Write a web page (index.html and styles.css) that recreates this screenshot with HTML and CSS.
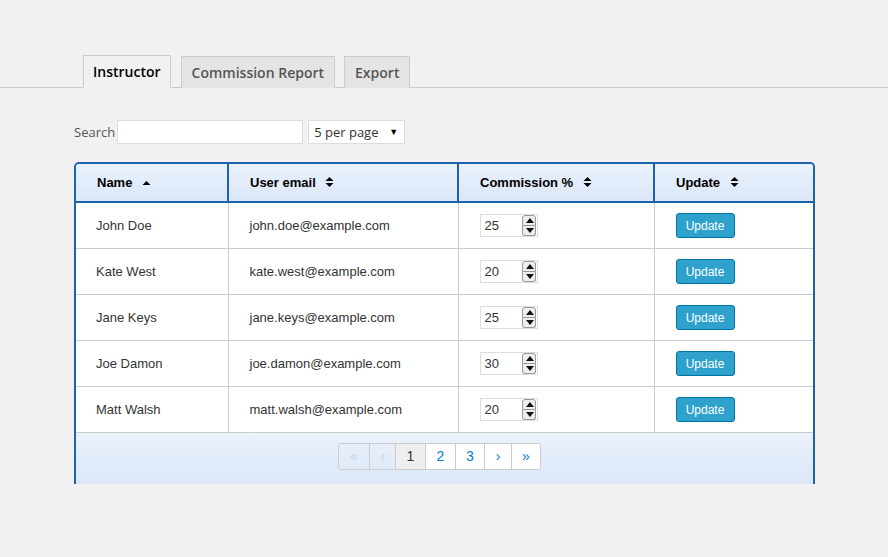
FILE: index.html
```html
<!DOCTYPE html>
<html lang="en">
<head>
    <meta charset="UTF-8">
    <title>Instructor Commission</title>
    <link rel="stylesheet" href="styles.css">
</head>
<body>
    <div class="tabs">
        <a class="tab active" href="#">Instructor</a>
        <a class="tab" href="#">Commission Report</a>
        <a class="tab" href="#">Export</a>
    </div>
    <main>
        <div class="toolbar">
            <label for="search">Search</label>
            <input type="text" id="search" class="search">
            <div class="per-page">5 per page <span class="caret">&#9660;</span></div>
        </div>
        <div class="grid">
            <table>
                <thead>
                    <tr>
                        <th class="c1">Name <svg class="sort" width="9" height="10" viewBox="0 0 9 10"><path d="M0.5 7 L4.5 3 L8.5 7 Z"/></svg></th>
                        <th class="c2">User email <svg class="sort" width="9" height="12" viewBox="0 0 9 12"><path d="M0.5 5 L4.5 1 L8.5 5 Z M0.5 7 L4.5 11 L8.5 7 Z"/></svg></th>
                        <th class="c3">Commission % <svg class="sort" width="9" height="12" viewBox="0 0 9 12"><path d="M0.5 5 L4.5 1 L8.5 5 Z M0.5 7 L4.5 11 L8.5 7 Z"/></svg></th>
                        <th class="c4">Update <svg class="sort" width="9" height="12" viewBox="0 0 9 12"><path d="M0.5 5 L4.5 1 L8.5 5 Z M0.5 7 L4.5 11 L8.5 7 Z"/></svg></th>
                    </tr>
                </thead>
                <tbody>
                    <tr>
                        <td>John Doe</td>
                        <td>john.doe@example.com</td>
                        <td><div class="num"><span>25</span><span class="spin"><i class="up"></i><i class="down"></i></span></div></td>
                        <td><button class="update">Update</button></td>
                    </tr>
                    <tr>
                        <td>Kate West</td>
                        <td>kate.west@example.com</td>
                        <td><div class="num"><span>20</span><span class="spin"><i class="up"></i><i class="down"></i></span></div></td>
                        <td><button class="update">Update</button></td>
                    </tr>
                    <tr>
                        <td>Jane Keys</td>
                        <td>jane.keys@example.com</td>
                        <td><div class="num"><span>25</span><span class="spin"><i class="up"></i><i class="down"></i></span></div></td>
                        <td><button class="update">Update</button></td>
                    </tr>
                    <tr>
                        <td>Joe Damon</td>
                        <td>joe.damon@example.com</td>
                        <td><div class="num"><span>30</span><span class="spin"><i class="up"></i><i class="down"></i></span></div></td>
                        <td><button class="update">Update</button></td>
                    </tr>
                    <tr>
                        <td>Matt Walsh</td>
                        <td>matt.walsh@example.com</td>
                        <td><div class="num"><span>20</span><span class="spin"><i class="up"></i><i class="down"></i></span></div></td>
                        <td><button class="update">Update</button></td>
                    </tr>
                </tbody>
            </table>
            <div class="pager-bar">
                <ul class="pager">
                    <li class="off w30">&laquo;</li>
                    <li class="off w26">&lsaquo;</li>
                    <li class="current w30">1</li>
                    <li class="w30">2</li>
                    <li class="w29">3</li>
                    <li class="w27">&rsaquo;</li>
                    <li class="w29">&raquo;</li>
                </ul>
            </div>
        </div>
    </main>
</body>
</html>
```

FILE: styles.css
```css
body {
    margin: 0;
    background: #f1f1f1;
    font-family: "Open Sans", sans-serif;
    color: #444;
}
.tabs {
    display: flex;
    align-items: flex-end;
    gap: 9px;
    padding: 55px 0 0 83px;
    border-bottom: 1px solid #ccc;
    height: 32px;
}
.tab {
    display: block;
    box-sizing: border-box;
    height: 32px;
    padding: 0 10px;
    margin-bottom: -1px;
    border: 1px solid #ccc;
    border-bottom: none;
    background: #e4e4e4;
    color: #555;
    font-size: 14px;
    font-weight: 600;
    line-height: 31px;
    text-decoration: none;
}
.tab.active {
    height: 33px;
    padding: 0 9px;
    margin-right: 1px;
    background: #f1f1f1;
    color: #000;
    border-bottom: 1px solid #f1f1f1;
}
main {
    padding: 32px 73px 0 74px;
}
.toolbar {
    display: flex;
    align-items: center;
    height: 24px;
    font-size: 13px;
}
.toolbar label {
    color: #555;
    margin-right: 2px;
}
.search {
    box-sizing: border-box;
    width: 186px;
    height: 24px;
    margin: 0 5px 0 0;
    border: 1px solid #ddd;
    background: #fff;
}
.per-page {
    box-sizing: border-box;
    width: 97px;
    height: 24px;
    padding: 0 0 0 5px;
    border: 1px solid #ddd;
    background: #fff;
    color: #333;
    font-size: 13px;
    line-height: 22px;
    position: relative;
}
.caret {
    position: absolute;
    right: 6px;
    top: 0;
    font-size: 9px;
    color: #000;
}
.grid {
    margin-top: 18px;
    width: 741px;
    box-sizing: border-box;
    border: 2px solid #1d62ad;
    border-bottom: none;
    border-radius: 5px 5px 0 0;
    overflow: hidden;
    font-family: "Liberation Sans", Arial, sans-serif;
}
table {
    width: 100%;
    border-collapse: collapse;
    table-layout: fixed;
}
th {
    height: 37px;
    padding: 0 0 0 21px;
    text-align: left;
    font-size: 13px;
    font-weight: bold;
    color: #000;
    background: linear-gradient(#e9f1fc, #dbe7f8);
    border-bottom: 2px solid #1d62ad;
    border-left: 2px solid #1d62ad;
}
th.c1 { width: 130px; border-left: none; }
th.c2 { width: 207px; }
th.c3 { width: 173px; }
.sort {
    margin-left: 6px;
    vertical-align: -1px;
}
td {
    height: 45px;
    padding: 0 0 0 21px;
    font-size: 13px;
    color: #333;
    background: #fff;
    border-left: 1px solid #ccc;
    border-bottom: 1px solid #ccc;
}
td:first-child {
    padding-left: 20px;
    border-left: none;
}
.num {
    box-sizing: border-box;
    display: flex;
    align-items: center;
    justify-content: space-between;
    width: 58px;
    height: 23px;
    padding: 0 1px 0 4px;
    border: 1px solid #ddd;
    background: #fff;
    color: #333;
}
.spin {
    display: flex;
    flex-direction: column;
    width: 14px;
}
.spin i {
    display: block;
    height: 9px;
    border: 1px solid #999;
    background: #eee;
    position: relative;
}
.spin .up {
    border-radius: 3px 3px 0 0;
}
.spin .down {
    border-top: none;
    border-radius: 0 0 3px 3px;
}
.spin i::after {
    content: "";
    position: absolute;
    left: 3px;
    border-left: 4px solid transparent;
    border-right: 4px solid transparent;
}
.spin .up::after {
    top: 2px;
    border-bottom: 5px solid #111;
}
.spin .down::after {
    top: 2px;
    border-top: 5px solid #111;
}
.update {
    box-sizing: border-box;
    width: 59px;
    height: 25px;
    padding: 0;
    border: 1px solid #0074a2;
    border-radius: 3px;
    background: #2ea2cc;
    color: #fff;
    font-family: "Liberation Sans", Arial, sans-serif;
    font-size: 12px;
}
.pager-bar {
    height: 51px;
    display: flex;
    justify-content: center;
    align-items: flex-start;
    padding-right: 10px;
    background: linear-gradient(#eaf1fb, #dbe7f8);
}
.pager {
    display: flex;
    list-style: none;
    margin: 10px 0 0;
    padding: 0;
    border: 1px solid #ccc;
    border-radius: 3px;
    overflow: hidden;
}
.pager li {
    box-sizing: border-box;
    height: 25px;
    line-height: 25px;
    text-align: center;
    font-size: 14px;
    color: #0a7bbf;
    background: #fff;
    border-left: 1px solid #ccc;
}
.pager li:first-child {
    border-left: none;
}
.pager .off {
    background: transparent;
    color: #c9d3dd;
}
.pager .current {
    background: #eee;
    color: #333;
}
.w26 { width: 26px; }
.w27 { width: 27px; }
.w29 { width: 29px; }
.w30 { width: 30px; }
```
